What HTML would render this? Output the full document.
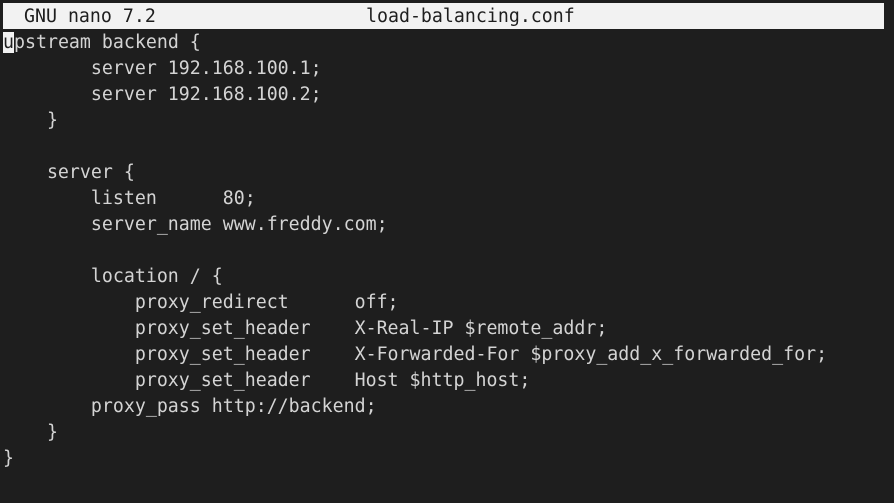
<!DOCTYPE html><html><head><style>
body{margin:0;width:894px;height:503px;background:#1e1e1e;overflow:hidden;font-family:"DejaVu Sans Mono","Liberation Mono",monospace;font-size:18.25px;color:#d4d4d4}
.bar{position:absolute;left:3px;top:3px;width:881px;height:26px;background:#f2f2f2;color:#1e1e1e}
.bar span{position:absolute;top:2px;line-height:24px;white-space:pre}
pre{position:absolute;left:3px;top:30px;margin:0;font:inherit;line-height:26px}
.cur{background:#f2f2f2;color:#1e1e1e}
</style></head><body>
<div class="bar"><span style="left:21px">GNU nano 7.2</span><span style="left:363px">load-balancing.conf</span></div>
<pre><span class="cur">u</span>pstream backend {
        server 192.168.100.1;
        server 192.168.100.2;
    }

    server {
        listen      80;
        server_name www.freddy.com;

        location / {
            proxy_redirect      off;
            proxy_set_header    X-Real-IP $remote_addr;
            proxy_set_header    X-Forwarded-For $proxy_add_x_forwarded_for;
            proxy_set_header    Host $http_host;
        proxy_pass http://backend;
    }
}</pre>
</body></html>
